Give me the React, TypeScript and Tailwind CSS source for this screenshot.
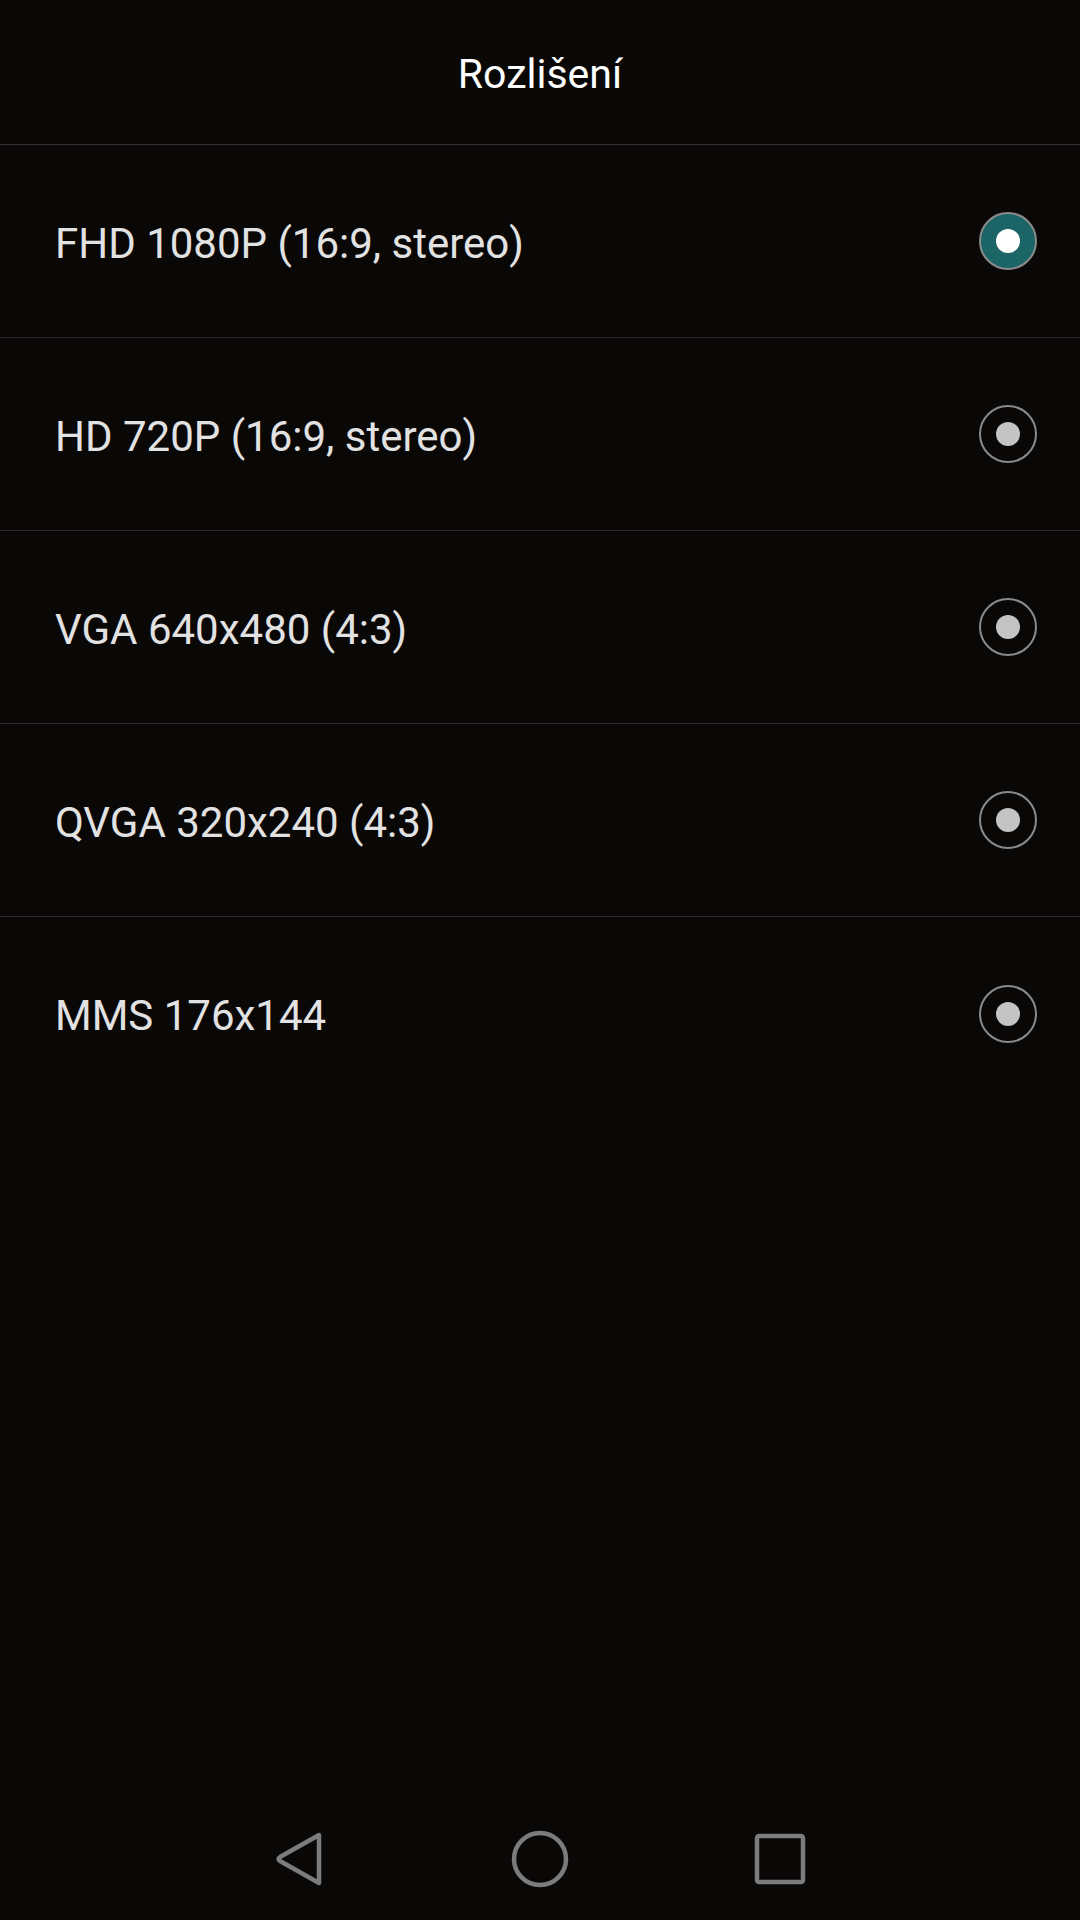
import React from "react";

const items = [
  "FHD 1080P (16:9, stereo)",
  "HD 720P (16:9, stereo)",
  "VGA 640x480 (4:3)",
  "QVGA 320x240 (4:3)",
  "MMS 176x144",
];

function Radio({ selected }: { selected: boolean }) {
  return selected ? (
    <div className="w-[58px] h-[58px] rounded-full bg-[#1b6566] border-2 border-[#8a8a8a] flex items-center justify-center">
      <div className="w-[24px] h-[24px] rounded-full bg-white" />
    </div>
  ) : (
    <div className="w-[58px] h-[58px] rounded-full border-2 border-[#8a8a8a] flex items-center justify-center">
      <div className="w-[24px] h-[24px] rounded-full bg-[#c4c4c4]" />
    </div>
  );
}

export default function App() {
  return (
    <div
      className="w-[1080px] h-[1920px] bg-[#0a0707] flex flex-col text-[#e2e2e2]"
      style={{ fontFamily: "Roboto, 'Noto Sans', sans-serif" }}
    >
      <div className="h-[145px] shrink-0 flex items-center justify-center border-b border-[#333131] pt-[4px]">
        <span className="text-[41px] text-white leading-none">Rozlišení</span>
      </div>
      {items.map((t, i) => (
        <div
          key={t}
          className={`h-[193px] shrink-0 flex items-center justify-between pl-[55px] pr-[43px] ${
            i < items.length - 1 ? "border-b border-[#2c2a2a]" : ""
          }`}
        >
          <span className="text-[42px] leading-none pt-[5px]">{t}</span>
          <Radio selected={i === 0} />
        </div>
      ))}
      <div className="flex-1" />
      <div className="h-[126px] shrink-0 flex items-center justify-center gap-[185px] pt-[4px]">
        <svg width="52" height="56" viewBox="0 0 52 56">
          <path d="M45 4 L45 52 L6 30 Q3 28 6 26 Z" fill="none" stroke="#7c7c7c" strokeWidth="4.5" strokeLinejoin="round" />
        </svg>
        <svg width="58" height="58" viewBox="0 0 58 58">
          <circle cx="29" cy="29" r="26" fill="none" stroke="#7c7c7c" strokeWidth="4.5" />
        </svg>
        <svg width="52" height="52" viewBox="0 0 52 52">
          <rect x="3" y="3" width="46" height="46" rx="2" fill="none" stroke="#7c7c7c" strokeWidth="4.5" />
        </svg>
      </div>
    </div>
  );
}
